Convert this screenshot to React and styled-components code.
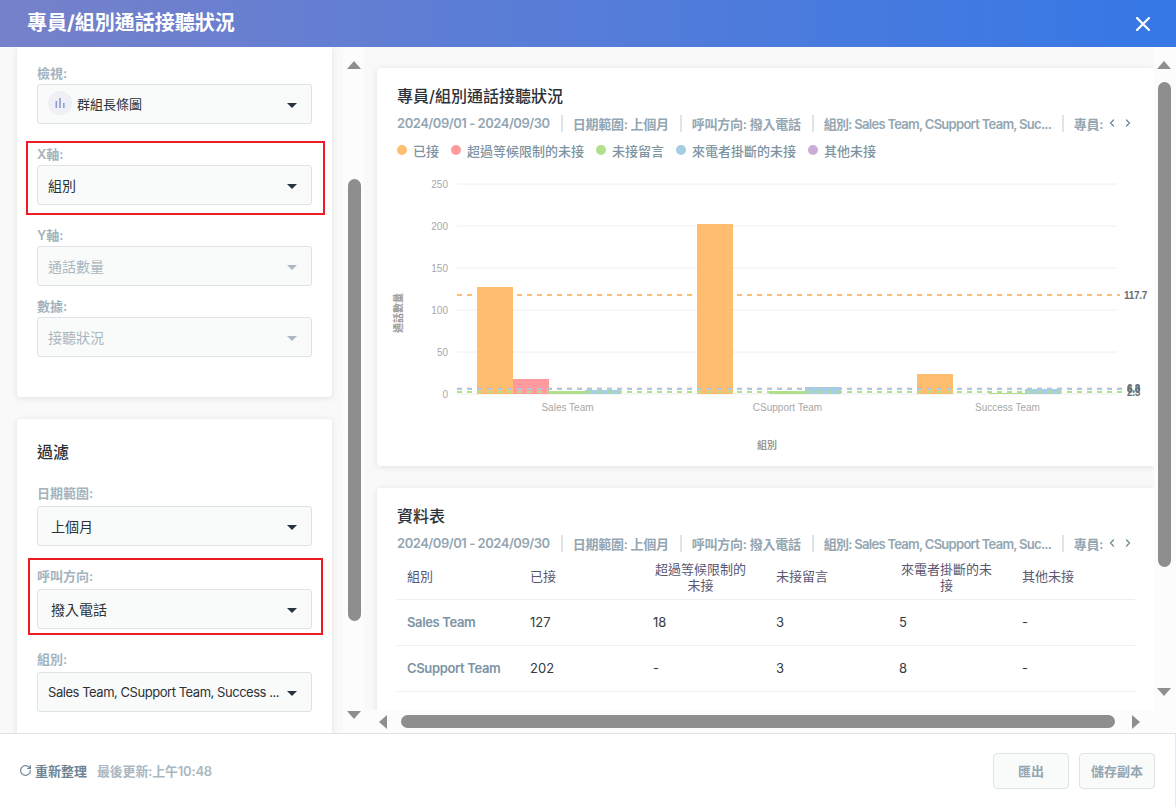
import React from "react";
import styled, { createGlobalStyle } from "styled-components";
import { RotateCw, ChevronLeft, ChevronRight } from "lucide-react";

const Global = createGlobalStyle`
  html, body { margin: 0; padding: 0; height: 100%; }
  body { font-family: Inter, "Noto Sans CJK TC", sans-serif; background: #fff; color: #333; }
  * { box-sizing: border-box; }
`;

const Page = styled.div`
  width: 1176px; height: 807px; display: flex; flex-direction: column; overflow: hidden;
`;
const Header = styled.header`
  height: 47px; flex: none; display: flex; align-items: center; justify-content: space-between;
  padding: 0 26px 0 27px; background: linear-gradient(90deg, #7681ca 0%, #3578e6 100%);
`;
const HeaderTitle = styled.h1`
  margin: 0; color: #fff; font-size: 20px; font-weight: 700; line-height: 47px;
`;
const CloseIcon = styled.svg`
  width: 14px; height: 14px; display: block;
`;
const Body = styled.main`
  flex: 1; min-height: 0; display: flex;
`;
const Side = styled.aside`
  width: 364px; flex: none; display: flex; background: #f9f9f9;
`;
const SideScroll = styled.div`
  width: 343px; flex: none; padding-left: 17px; overflow: hidden;
`;
const Card = styled.section`
  background: #fff; border-radius: ${p => p.$square ? "0 0 4px 4px" : "4px"};
  box-shadow: 0 1px 6px rgba(0,0,0,.1);
`;
const SideCard = styled(Card)`
  width: 315px; padding: ${p => p.$pad}; margin-bottom: 22px;
`;
const Field = styled.div`
  position: relative; margin-bottom: ${p => p.$mb || 0}px;
`;
const Label = styled.div`
  height: 21px; line-height: ${p => p.$raised ? 17 : 21}px; font-size: 13px; font-weight: 600; color: #a3b4be;
`;
const Select = styled.div`
  height: 40px; display: flex; align-items: center; justify-content: space-between; gap: 6px;
  padding: 0 14px 0 ${p => p.$inset || 10}px;
  background: #f9fafa; border: 1px solid #dde3e7; border-radius: 3px;
  font-size: ${p => p.$size || 14}px;
  color: ${p => p.$off ? "#a9b7c0" : "#2c3238"};
`;
const SelectText = styled.span`
  display: flex; align-items: center; gap: 5px; min-width: 0; white-space: nowrap;
  letter-spacing: ${p => p.$ls || 0}px; margin-top: ${p => p.$mt || 0}px;
`;
const Caret = styled.i`
  flex: none; width: 0; height: 0; margin-top: 2px;
  border-left: 5px solid transparent; border-right: 5px solid transparent;
  border-top: 5px solid ${p => p.$off ? "#adb8c0" : "#27333d"};
`;
const Badge = styled.svg`
  width: 24px; height: 24px; flex: none; display: block;
`;
const Highlight = styled.div`
  position: absolute; pointer-events: none; border: 2px solid #ed1c24;
  top: ${p => p.$t}px; bottom: ${p => p.$b}px; left: ${p => p.$l}px; right: ${p => p.$r}px;
`;
const CardHeading = styled.h2`
  margin: 0; font-size: 16px; font-weight: 500; line-height: 24px; color: #2c3238;
`;
const FilterHeading = styled(CardHeading)`
  margin-bottom: 21px;
`;
const VRail = styled.div`
  flex: none; width: ${p => p.$w}px; display: flex; flex-direction: column; align-items: flex-start;
  padding: 14px 0 14px ${p => p.$pl}px; background: #fcfcfc;
`;
const ArrowUp = styled.i`
  width: 0; height: 0; flex: none;
  border-left: 7.5px solid transparent; border-right: 7.5px solid transparent; border-bottom: 8px solid #8e8e8e;
`;
const ArrowDown = styled.i`
  width: 0; height: 0; flex: none; margin-top: auto;
  border-left: 7.5px solid transparent; border-right: 7.5px solid transparent; border-top: 8px solid #8e8e8e;
`;
const VThumb = styled.div`
  width: 13px; margin-left: 1px; flex: none; background: #8e8e8e; border-radius: 7px;
  height: ${p => p.$h}px; margin-top: ${p => p.$top}px;
`;
const Main = styled.div`
  flex: 1; min-width: 0; display: flex; flex-direction: column; background: #f9f9f9;
`;
const MainTop = styled.div`
  flex: 1; min-height: 0; display: flex;
`;
const MainScroll = styled.div`
  flex: 1; min-width: 0; overflow: hidden; padding: 21px 0 0 13px; display: flex; flex-direction: column; gap: 22px;
`;
const ReportCard = styled(Card)`
  flex: none; height: ${p => p.$h}px; padding: 16px 20px 0; border-radius: 4px 0 0 4px;
`;
const Meta = styled.div`
  display: flex; align-items: center; height: 24px; margin-top: 3px; white-space: nowrap;
  font-size: 13px; font-weight: 600; color: #93a6b2; letter-spacing: -.25px;
`;
const MetaItem = styled.span`
  display: block; flex: none;
  ${p => p.$ls ? `letter-spacing: ${p.$ls}px;` : ""}
  ${p => p.$w ? `width: ${p.$w}px;` : ""}
`;
const MetaDivider = styled.i`
  flex: none; width: 2px; height: 17px; background: #e1e4e6; margin: 0 ${p => p.$r || 10}px 0 ${p => p.$l || 11}px;
`;
const MetaChevrons = styled.span`
  display: flex; align-items: center; gap: 4px; margin-left: 3px; color: #6e8595;
`;
const Legend = styled.div`
  display: flex; gap: 12px; margin-top: 3px; height: 24px; align-items: center;
`;
const LegendItem = styled.span`
  display: flex; align-items: center; gap: 6px; font-size: 13px; color: #7d93a2; font-weight: 500;
`;
const Dot = styled.i`
  width: 10px; height: 10px; border-radius: 50%; background: ${p => p.$c};
`;
const ChartSvg = styled.svg`
  display: block; width: 777px; height: 290px; margin: 8px 0 0 -20px;
`;
const Table = styled.div`
  display: flex; flex-direction: column; width: 738px; margin-top: 2px;
`;
const TableRow = styled.div`
  display: grid; grid-template-columns: repeat(6, 123px); align-items: center;
  height: ${p => p.$h}px; padding-bottom: 2px; border-bottom: 1px solid #eceff1; font-size: 13px;
`;
const Th = styled.div`
  padding: 0 0 3px 10px; color: #5a5670; line-height: 16px;
`;
const WrapTh = styled(Th)`
  padding-bottom: 0;
`;
const ThText = styled.span`
  display: inline-block; max-width: 95px; text-align: center;
`;
const Td = styled.div`
  padding-left: 10px; color: #333a40;
`;
const NameCell = styled(Td)`
  color: #7b94a5; font-weight: 600; white-space: nowrap; letter-spacing: -.35px;
`;
const HRail = styled.div`
  flex: none; height: 23px; display: flex; align-items: center; background: #fcfcfc; padding: 0 36px 0 15px;
`;
const ArrowLeft = styled.i`
  width: 0; height: 0; flex: none;
  border-top: 7.5px solid transparent; border-bottom: 7.5px solid transparent; border-right: 8px solid #8e8e8e;
`;
const ArrowRight = styled.i`
  width: 0; height: 0; flex: none;
  border-top: 7.5px solid transparent; border-bottom: 7.5px solid transparent; border-left: 8px solid #8e8e8e;
`;
const HThumb = styled.div`
  width: 714px; height: 13px; margin: 0 17px 0 14px; border-radius: 7px; background: #8e8e8e;
`;
const Footer = styled.footer`
  flex: none; height: 74px; display: flex; align-items: center; justify-content: space-between;
  padding: 0 20px 0 19px; background: #fff; border-top: 1px solid #dde3e7; border-right: 1px solid #e6eaed;
`;
const FooterLeft = styled.div`
  display: flex; align-items: center; font-size: 13px; font-weight: 600;
`;
const Refresh = styled.span`
  display: flex; align-items: center; gap: 3px; color: #6f8494;
`;
const Updated = styled.span`
  margin-left: 10px; color: #a9b8c2; letter-spacing: -.2px;
`;
const Buttons = styled.div`
  display: flex; gap: 10px;
`;
const Button = styled.button`
  width: 76px; height: 36px; padding: 0; border: 1px solid #dde3e7; border-radius: 4px; background: #f9fafa;
  font: 600 13px Inter, "Noto Sans CJK TC", sans-serif; color: #94a6b1;
`;

const AxisText = styled.text`
  font-family: "Liberation Sans", "Noto Sans CJK TC", sans-serif; font-size: 10px; fill: #a8a8a8;
`;
const AxisTitle = styled(AxisText)`
  font-weight: 700; fill: #9a9a9a;
`;
const AvgText = styled.text`
  font-family: "Liberation Sans", sans-serif; font-size: 10px; font-weight: 700; fill: #666e76; letter-spacing: -.3px;
`;

const C = { o: "#ffbd6f", r: "#ff9a9e", g: "#b2df8a", b: "#a6cee3", p: "#cbaed8" };

const gridY = [[250, 184], [200, 226], [150, 268], [100, 310], [50, 352], [0, 394]];
const bars = [
  [477, 287, C.o], [513, 379, C.r], [549, 391, C.g], [585, 390, C.b],
  [697, 224, C.o], [769, 391, C.g], [805, 387, C.b],
  [917, 374, C.o], [989, 393, C.g], [1025, 389, C.b],
];

function Chart() {
  return (
    <ChartSvg viewBox="377 170 777 290">
      {gridY.map(([v, y]) => (
        <g key={v}>
          <line x1="457" x2="1117" y1={y} y2={y} stroke="#eeeeee" />
          <AxisText x="448" y={y + 3.5} textAnchor="end">{v}</AxisText>
        </g>
      ))}
      <line x1="457" x2="1120" y1="295" y2="295" stroke={C.o} strokeWidth="2" strokeDasharray="5 5" />
      {bars.map(([x, y, c]) => (
        <rect key={x} x={x} y={y} width="36" height={394 - y} fill={c} />
      ))}
      <line x1="457" x2="1122" y1="388" y2="388" stroke={C.r} strokeOpacity=".35" strokeWidth="2" strokeDasharray="5 5" />
      <line x1="457" x2="1122" y1="389" y2="389" stroke={C.b} strokeWidth="2" strokeDasharray="5 5" />
      <line x1="457" x2="1122" y1="392" y2="392" stroke={C.g} strokeWidth="2" strokeDasharray="5 5" />
      <AvgText x="1124" y="298.5">117.7</AvgText>
      <AvgText x="1127" y="392">6.3</AvgText>
      <AvgText x="1127" y="392.5">6.0</AvgText>
      <AvgText x="1127" y="395.5">2.3</AvgText>
      {[["Sales Team", 567.5], ["CSupport Team", 787.5], ["Success Team", 1007.5]].map(([t, x]) => (
        <AxisText key={t} x={x} y="411" textAnchor="middle">{t}</AxisText>
      ))}
      <AxisTitle x="767" y="449" textAnchor="middle">組別</AxisTitle>
      <AxisTitle transform="translate(402 313) rotate(-90)" textAnchor="middle">通話數量</AxisTitle>
    </ChartSvg>
  );
}

function MetaRow() {
  return (
    <Meta>
      <MetaItem $ls={-0.47}>2024/09/01 - 2024/09/30</MetaItem>
      <MetaDivider />
      <MetaItem>日期範圍: 上個月</MetaItem>
      <MetaDivider />
      <MetaItem>呼叫方向: 撥入電話</MetaItem>
      <MetaDivider />
      <MetaItem $w={224} $ls={-0.72}>組別: Sales Team, CSupport Team, Suc...</MetaItem>
      <MetaDivider $l={14} />
      <MetaItem>專員:</MetaItem>
      <MetaChevrons>
        <ChevronLeft size={12} strokeWidth={2.5} />
        <ChevronRight size={12} strokeWidth={2.5} />
      </MetaChevrons>
    </Meta>
  );
}

function SelectBox({ children, off, inset, size, ls, mt }) {
  return (
    <Select $off={off} $inset={inset} $size={size}>
      <SelectText $ls={ls} $mt={mt}>{children}</SelectText>
      <Caret $off={off} />
    </Select>
  );
}

const legend = [
  ["已接", C.o], ["超過等候限制的未接", C.r], ["未接留言", C.g], ["來電者掛斷的未接", C.b], ["其他未接", C.p],
];
const rows = [
  ["Sales Team", "127", "18", "3", "5", "-"],
  ["CSupport Team", "202", "-", "3", "8", "-"],
];

export default function App() {
  return (
    <Page>
      <Global />
      <Header>
        <HeaderTitle>專員/組別通話接聽狀況</HeaderTitle>
        <CloseIcon viewBox="0 0 14 14">
          <path d="M1 1 L13 13 M13 1 L1 13" stroke="#fff" strokeWidth="2.2" strokeLinecap="round" />
        </CloseIcon>
      </Header>
      <Body>
        <Side>
          <SideScroll>
            <SideCard $square $pad="16px 20px 40px">
              <Field $mb={20}>
                <Label>檢視:</Label>
                <SelectBox size={13} mt={-2}>
                  <Badge viewBox="0 0 24 24">
                    <circle cx="12" cy="12" r="12" fill="#eef0f5" />
                    <rect x="7.5" y="10" width="1.6" height="7" fill="#8f9bd8" />
                    <rect x="11.2" y="7" width="1.6" height="10" fill="#8f9bd8" />
                    <rect x="15" y="12" width="1.6" height="5" fill="#8f9bd8" />
                  </Badge>
                  群組長條圖
                </SelectBox>
              </Field>
              <Field $mb={20}>
                <Label>X軸:</Label>
                <SelectBox>組別</SelectBox>
                <Highlight $t={-3} $b={-10} $l={-11} $r={-13} />
              </Field>
              <Field $mb={10}>
                <Label>Y軸:</Label>
                <SelectBox off>通話數量</SelectBox>
              </Field>
              <Field>
                <Label>數據:</Label>
                <SelectBox off>接聽狀況</SelectBox>
              </Field>
            </SideCard>
            <SideCard $pad="21px 20px 40px">
              <FilterHeading>過濾</FilterHeading>
              <Field $mb={22}>
                <Label $raised>日期範圍:</Label>
                <SelectBox inset={13}>上個月</SelectBox>
              </Field>
              <Field $mb={22}>
                <Label $raised>呼叫方向:</Label>
                <SelectBox inset={13}>撥入電話</SelectBox>
                <Highlight $t={-10} $b={-6} $l={-9} $r={-11} />
              </Field>
              <Field>
                <Label $raised>組別:</Label>
                <SelectBox size={13} ls={-0.46}>Sales Team, CSupport Team, Success ...</SelectBox>
              </Field>
            </SideCard>
          </SideScroll>
          <VRail $w={21} $pl={4}>
            <ArrowUp />
            <VThumb $top={110} $h={442} />
            <ArrowDown />
          </VRail>
        </Side>
        <Main>
          <MainTop>
            <MainScroll>
              <ReportCard $h={398}>
                <CardHeading>專員/組別通話接聽狀況</CardHeading>
                <MetaRow />
                <Legend>
                  {legend.map(([t, c]) => (
                    <LegendItem key={t}><Dot $c={c} />{t}</LegendItem>
                  ))}
                </Legend>
                <Chart />
              </ReportCard>
              <ReportCard $h={240}>
                <CardHeading>資料表</CardHeading>
                <MetaRow />
                <Table>
                  <TableRow $h={43}>
                    <Th>組別</Th>
                    <Th>已接</Th>
                    <WrapTh><ThText>超過等候限制的未接</ThText></WrapTh>
                    <Th>未接留言</Th>
                    <WrapTh><ThText>來電者掛斷的未接</ThText></WrapTh>
                    <Th>其他未接</Th>
                  </TableRow>
                  {rows.map(([name, ...vals]) => (
                    <TableRow key={name} $h={46}>
                      <NameCell>{name}</NameCell>
                      {vals.map((v, i) => <Td key={i}>{v}</Td>)}
                    </TableRow>
                  ))}
                </Table>
              </ReportCard>
            </MainScroll>
            <VRail $w={22} $pl={3}>
              <ArrowUp />
              <VThumb $top={13} $h={485} />
              <ArrowDown />
            </VRail>
          </MainTop>
          <HRail>
            <ArrowLeft />
            <HThumb />
            <ArrowRight />
          </HRail>
        </Main>
      </Body>
      <Footer>
        <FooterLeft>
          <Refresh><RotateCw size={13} strokeWidth={2.2} />重新整理</Refresh>
          <Updated>最後更新:上午10:48</Updated>
        </FooterLeft>
        <Buttons>
          <Button>匯出</Button>
          <Button>儲存副本</Button>
        </Buttons>
      </Footer>
    </Page>
  );
}
